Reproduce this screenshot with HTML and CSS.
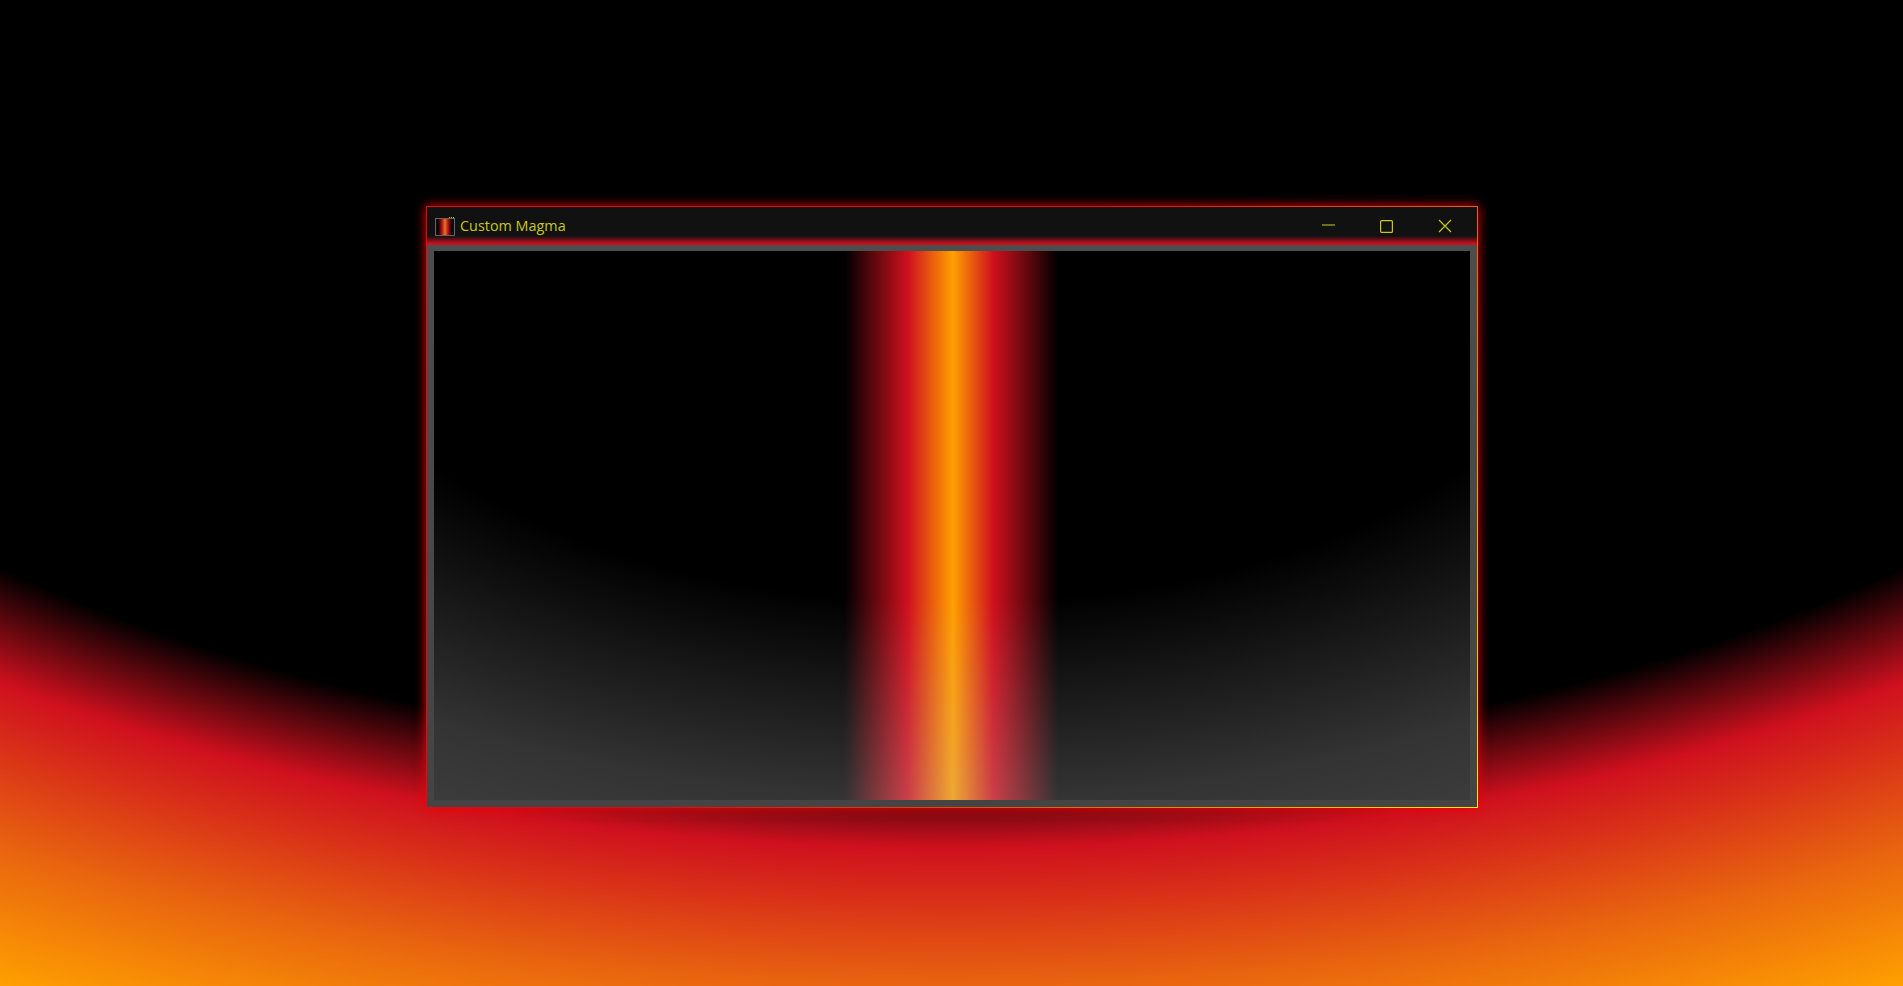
FILE: index.html
```html
<!DOCTYPE html>
<html>
<head>
<meta http-equiv="Content-Type" content="text/html; charset=utf-8"/>
<title>Custom Magma</title>
<link rel="stylesheet" href="styles.css">
</head>

<body>
<div class="window">
  <div class="titlebar">
    <svg class="app-icon" width="20" height="20" viewBox="0 0 20 20">
      <defs>
        <linearGradient id="magma" x1="0" x2="1" y1="0" y2="0">
          <stop offset="0" stop-color="#000"/>
          <stop offset="0.28" stop-color="#b80e1a"/>
          <stop offset="0.5" stop-color="#e07c20"/>
          <stop offset="0.72" stop-color="#b80e1a"/>
          <stop offset="1" stop-color="#000"/>
        </linearGradient>
      </defs>
      <rect x="0.5" y="2.5" width="19" height="17" fill="#0c0c0c" stroke="#666"/>
      <rect x="3" y="3" width="14" height="16" fill="url(#magma)"/>
      <rect x="14" y="1" width="1" height="1" fill="#c8c81e"/>
      <rect x="16" y="1" width="1" height="1" fill="#c8c81e"/>
      <rect x="18" y="1" width="1" height="1" fill="#c8c81e"/>
    </svg>
    <span class="title">Custom Magma</span>
    <div class="controls">
      <div class="btn dim">
        <svg width="14" height="14" viewBox="0 0 14 14"><path d="M0 6H13" stroke="currentColor" stroke-width="1.4" fill="none"/></svg>
      </div>
      <div class="btn">
        <svg width="14" height="14" viewBox="0 0 14 14"><rect x="0.6" y="1.6" width="11.8" height="11.8" rx="1" stroke="currentColor" stroke-width="1.2" fill="none"/></svg>
      </div>
      <div class="btn">
        <svg width="14" height="14" viewBox="0 0 14 14"><path d="M1 1L13 13M13 1L1 13" stroke="currentColor" stroke-width="1.2" fill="none"/></svg>
      </div>
    </div>
  </div>
  <div class="frame">
    <div class="client"></div>
  </div>
</div>
</body>
</html>
```

FILE: styles.css
```css
html, body {
  margin: 0;
  height: 100%;
}

body {
  box-sizing: border-box;
  padding: 206px 0 0 426px;
  overflow: hidden;
  background: radial-gradient(2092px 1107px at 50% 0, #000 68.5%, #cf101e 76.6%, #e8640f 89%, #ffa000 100%);
}

.window {
  width: 1052px;
  height: 602px;
  box-sizing: border-box;
  display: flex;
  flex-direction: column;
  border: 1px solid;
  border-image: linear-gradient(125deg, #e00a14 45%, #e8640f 72%, #ffe600 100%) 1;
  box-shadow: 0 0 10px #f00000;
}

.titlebar {
  height: 38px;
  flex: none;
  box-sizing: border-box;
  display: flex;
  align-items: center;
  padding: 0 3px 0 8px;
  background: linear-gradient(#111 29px, #cf101e 37px, #cf101e);
  color: #c8c81e;
}

.app-icon {
  flex: none;
}

.title {
  margin-left: 5px;
  font-family: "Open Sans", sans-serif;
  font-size: 14.4px;
  line-height: 20px;
}

.controls {
  margin-left: auto;
  display: flex;
}

.btn {
  width: 58px;
  height: 30px;
  display: flex;
  align-items: center;
  justify-content: center;
}

.btn.dim {
  color: #9a9a20;
}

.frame {
  flex: 1;
  display: flex;
  padding: 6px 7px 7px 7px;
  background: linear-gradient(#4d4d4d, #444);
}

.client {
  flex: 1;
  background:
    radial-gradient(1139px 616px at 50% 0, rgba(190,190,190,0) 57%, rgba(190,190,190,0.27) 89%, rgba(190,190,190,0.315) 100%),
    linear-gradient(90deg, #000 411px, #cf101e 474px, #ffa000 519px, #cf101e 559px, #000 624px);
}
```
